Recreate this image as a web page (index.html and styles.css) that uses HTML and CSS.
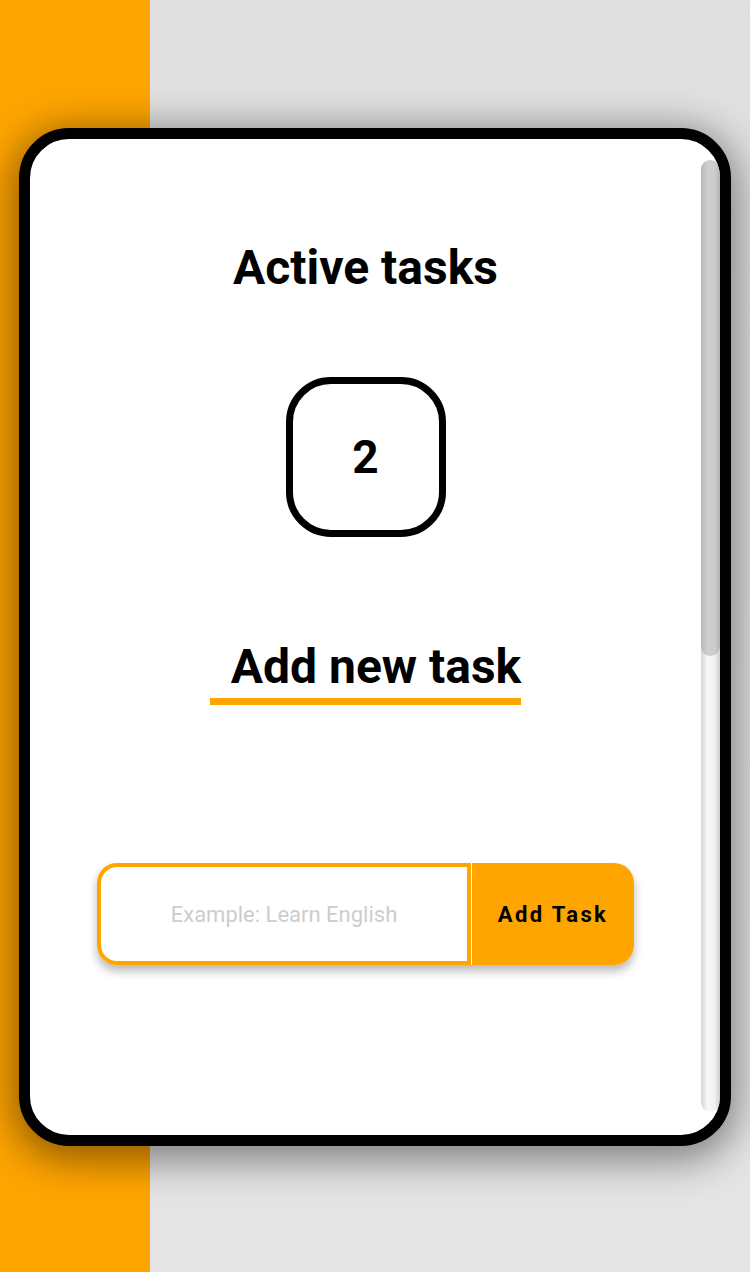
FILE: index.html
```html
<!DOCTYPE html>
<html lang="en">
<head>
<meta charset="utf-8">
<title>Tasks</title>
<link rel="stylesheet" href="styles.css">
</head>
<body>
  <div class="page">
    <section class="card">
      <div class="content">
        <h1 class="title">Active tasks</h1>
        <div class="counter">2</div>
        <h2 class="subtitle">Add new task</h2>
        <form class="task-form">
          <input class="task-input" type="text" placeholder="Example: Learn English">
          <button class="task-button" type="button">Add Task</button>
        </form>
      </div>
      <div class="scrollbar">
        <div class="scrollbar-thumb"></div>
      </div>
    </section>
  </div>
</body>
</html>
```
FILE: styles.css
```css
html, body {
  margin: 0;
  padding: 0;
  height: 1272px;
  overflow: hidden;
}

body {
  font-family: Roboto, "Liberation Sans", sans-serif;
  background:
    linear-gradient(to right, #ffa500 0, #ffa500 150px, transparent 150px),
    linear-gradient(to bottom, #e0e0e0, #e6e5e6);
}

.page {
  padding: 128px 0 0 19px;
}

.card {
  box-sizing: border-box;
  width: 712px;
  height: 1018px;
  border: 11px solid #000;
  border-radius: 50px;
  background: #fff;
  box-shadow: 0 8px 40px 6px rgba(0, 0, 0, 0.45);
  display: flex;
  overflow: hidden;
}

.content {
  flex: 1;
  display: flex;
  flex-direction: column;
  align-items: center;
  padding-top: 105px;
}

.title {
  margin: 0;
  font-size: 48px;
  line-height: 48px;
  font-weight: 700;
  color: #000;
}

.counter {
  box-sizing: border-box;
  margin-top: 85px;
  width: 160px;
  height: 160px;
  border: 7px solid #000;
  border-radius: 45px;
  display: flex;
  align-items: center;
  justify-content: center;
  font-size: 46px;
  font-weight: 700;
}

.subtitle {
  margin: 106px 0 0;
  padding: 0 0 7px 21px;
  font-size: 48px;
  line-height: 48px;
  font-weight: 700;
  border-bottom: 7px solid #ffa500;
}

.task-form {
  margin-top: 158px;
  display: flex;
  gap: 1px;
  width: 537px;
  height: 102px;
  border-radius: 20px;
  box-shadow: 0 6px 10px rgba(0, 0, 0, 0.28);
}

.task-input {
  box-sizing: border-box;
  width: 374px;
  height: 100%;
  margin: 0;
  border: 4px solid #ffa500;
  border-radius: 20px 0 0 20px;
  outline: none;
  font-family: Roboto, "Liberation Sans", sans-serif;
  font-size: 22px;
  text-align: center;
  background: #fff;
}

.task-input::placeholder {
  color: #cdcdcd;
}

.task-button {
  flex: 1;
  margin: 0;
  border: 0;
  border-radius: 0 20px 20px 0;
  background: #ffa500;
  font-family: Roboto, "Liberation Sans", sans-serif;
  font-size: 22px;
  font-weight: 700;
  letter-spacing: 2.4px;
  color: #000;
}

.scrollbar {
  width: 19px;
  margin: 21px 0 23px;
  border-radius: 10px;
  background: linear-gradient(to right, #d4d4d4 0, #f7f7f7 35%, #f3f3f3 70%, #cdcdcd 100%);
  display: flex;
  flex-direction: column;
}

.scrollbar-thumb {
  height: 496px;
  border-radius: 10px;
  background: linear-gradient(to right, #b9b9b9 0, #cfcfcf 35%, #cbcbcb 75%, #b3b3b3 100%);
}
```
